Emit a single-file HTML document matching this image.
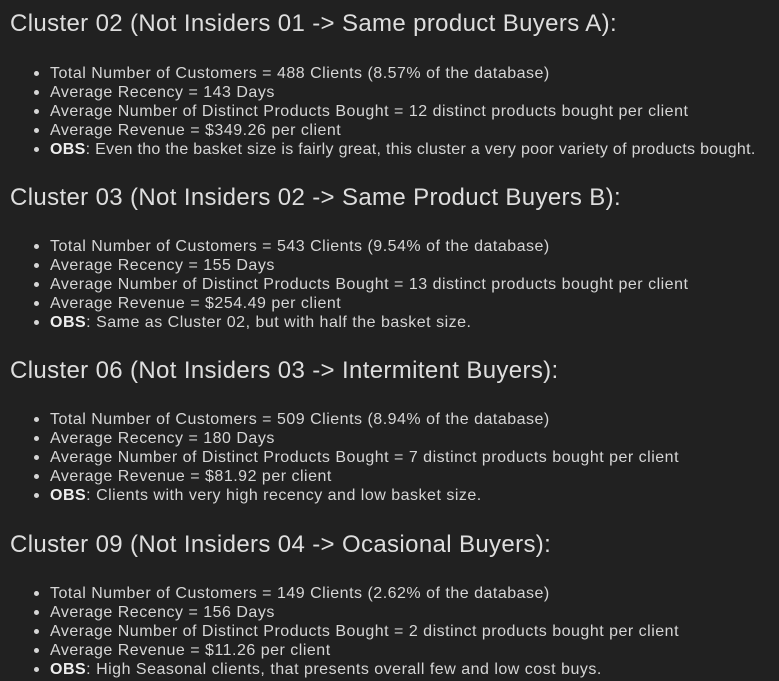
<!DOCTYPE html>
<html><head><meta charset="utf-8"><style>
body{margin:0;background:#212121;width:779px;height:681px;overflow:hidden;position:relative;font-family:"Liberation Sans","DejaVu Sans",sans-serif;color:#d6d6d6}
.h{position:absolute;left:10px;font-size:24px;line-height:30px;white-space:nowrap;color:#dedede;letter-spacing:0.36px;margin-top:1px}
.l{position:absolute;left:50px;font-size:16px;line-height:19px;white-space:nowrap;letter-spacing:0.5px;margin-top:1px}
.l:before{content:"";position:absolute;left:-16px;top:7px;width:5px;height:5px;border-radius:50%;background:#d6d6d6}
b{color:#eee}
</style></head><body>
<div class="h" style="top:8px">Cluster 02 (Not Insiders 01 -&gt; Same product Buyers A):</div>
<div class="l" style="top:63px">Total Number of Customers = 488 Clients (8.57% of the database)</div>
<div class="l" style="top:82px">Average Recency = 143 Days</div>
<div class="l" style="top:101px">Average Number of Distinct Products Bought = 12 distinct products bought per client</div>
<div class="l" style="top:120px">Average Revenue = $349.26 per client</div>
<div class="l" style="top:139px;letter-spacing:0.3px"><b>OBS</b>: Even tho the basket size is fairly great, this cluster a very poor variety of products bought.</div>

<div class="h" style="top:182px">Cluster 03 (Not Insiders 02 -&gt; Same Product Buyers B):</div>
<div class="l" style="top:236px">Total Number of Customers = 543 Clients (9.54% of the database)</div>
<div class="l" style="top:255px">Average Recency = 155 Days</div>
<div class="l" style="top:274px">Average Number of Distinct Products Bought = 13 distinct products bought per client</div>
<div class="l" style="top:293px">Average Revenue = $254.49 per client</div>
<div class="l" style="top:312px"><b>OBS</b>: Same as Cluster 02, but with half the basket size.</div>

<div class="h" style="top:355px">Cluster 06 (Not Insiders 03 -&gt; Intermitent Buyers):</div>
<div class="l" style="top:409px">Total Number of Customers = 509 Clients (8.94% of the database)</div>
<div class="l" style="top:428px">Average Recency = 180 Days</div>
<div class="l" style="top:447px">Average Number of Distinct Products Bought = 7 distinct products bought per client</div>
<div class="l" style="top:466px">Average Revenue = $81.92 per client</div>
<div class="l" style="top:485px"><b>OBS</b>: Clients with very high recency and low basket size.</div>

<div class="h" style="top:529px">Cluster 09 (Not Insiders 04 -&gt; Ocasional Buyers):</div>
<div class="l" style="top:583px">Total Number of Customers = 149 Clients (2.62% of the database)</div>
<div class="l" style="top:602px">Average Recency = 156 Days</div>
<div class="l" style="top:621px">Average Number of Distinct Products Bought = 2 distinct products bought per client</div>
<div class="l" style="top:640px">Average Revenue = $11.26 per client</div>
<div class="l" style="top:659px"><b>OBS</b>: High Seasonal clients, that presents overall few and low cost buys.</div>
</body></html>
